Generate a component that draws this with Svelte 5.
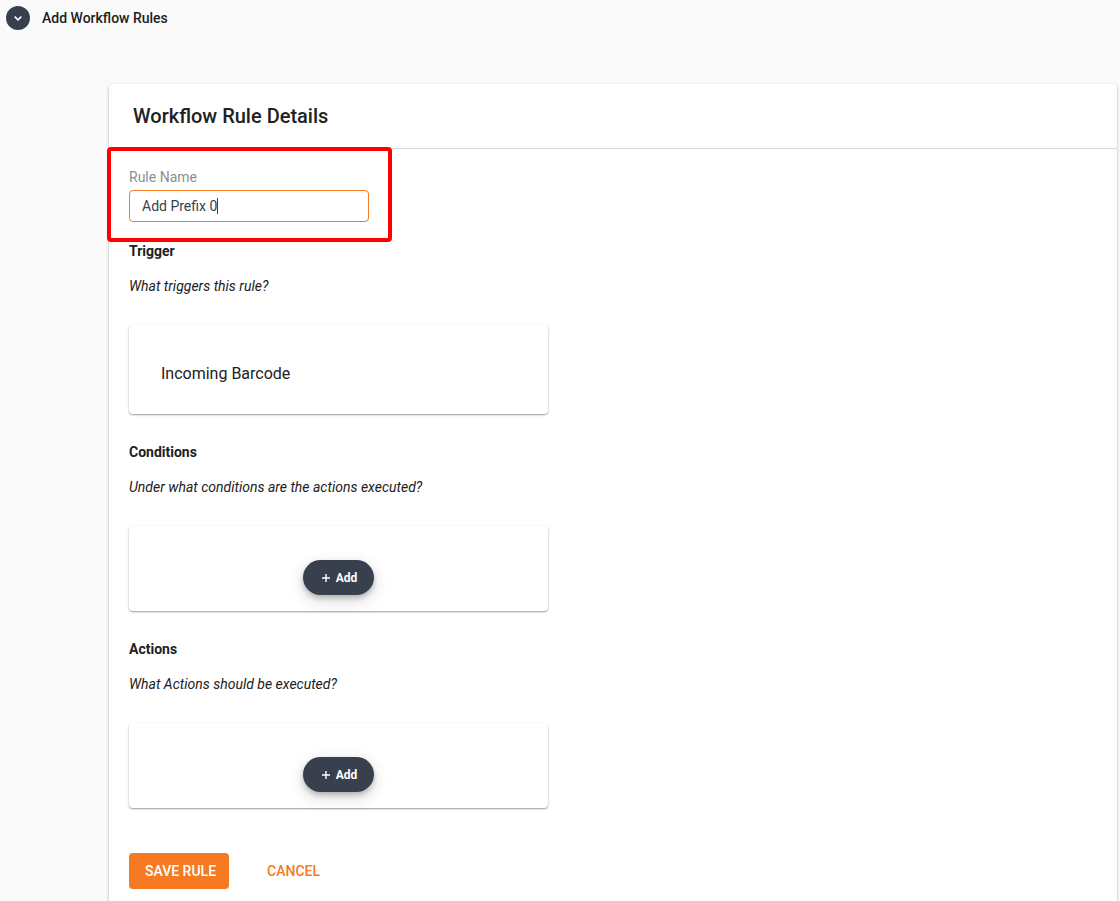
<script lang="ts">
  type Section = {
    title: string;
    question: string;
    value?: string;
  };

  const sections: Section[] = [
    { title: 'Trigger', question: 'What triggers this rule?', value: 'Incoming Barcode' },
    { title: 'Conditions', question: 'Under what conditions are the actions executed?' },
    { title: 'Actions', question: 'What Actions should be executed?' }
  ];

  let ruleName = $state('Add Prefix 0');
</script>

<div class="page">
  <header class="topbar">
    <button type="button" class="toggle" aria-label="Collapse">
      <svg width="24" height="24" viewBox="0 0 24 24" aria-hidden="true">
        <path d="M8.7 10.7 12 13.8l3.3-3.1" fill="none" stroke="currentColor" stroke-width="1.7" />
      </svg>
    </button>
    <h1>Add Workflow Rules</h1>
  </header>

  <main class="panel">
    <h2>Workflow Rule Details</h2>

    <form class="content" onsubmit={(event) => event.preventDefault()}>
      <div class="field">
        <label for="rule-name">Rule Name</label>
        <div class="input-wrap">
          <input id="rule-name" type="text" autocomplete="off" spellcheck="false" bind:value={ruleName} />
          <!-- caret follows an invisible copy of the value -->
          <div class="caret" aria-hidden="true">{ruleName}</div>
        </div>
      </div>

      {#each sections as section}
        <section>
          <h3>{section.title}</h3>
          <p class="question">{section.question}</p>
          <div class="card" class:filled={section.value}>
            {#if section.value}
              <span>{section.value}</span>
            {:else}
              <button type="button" class="add">
                <svg width="8" height="8" viewBox="0 0 8 8" aria-hidden="true">
                  <path d="M4 0v8M0 4h8" stroke="currentColor" stroke-width="1.4" />
                </svg>
                Add
              </button>
            {/if}
          </div>
        </section>
      {/each}

      <div class="actions">
        <button type="submit" class="btn btn-primary">SAVE RULE</button>
        <button type="button" class="btn btn-text">CANCEL</button>
      </div>
    </form>
  </main>
</div>

<style>
  :global(body) {
    background: #fafafa;
  }

  .page {
    --dark: #39404d;
    --orange: #f57a22;
    --text: #212121;
    display: flex;
    flex-direction: column;
    min-height: 100vh;
    color: var(--text);
    font-family: Roboto, sans-serif;
    font-size: 14px;
    line-height: 20px;
  }

  h1, h2, h3, p {
    margin: 0;
  }

  button {
    border: 0;
    padding: 0;
    font-family: inherit;
    cursor: pointer;
  }

  .topbar {
    display: flex;
    align-items: center;
    gap: 12px;
    height: 36px;
    padding: 0 6px;
  }

  .toggle {
    display: flex;
    border-radius: 50%;
    background: var(--dark);
    color: #fff;
  }

  h1 {
    font-size: 14px;
    font-weight: 500;
  }

  .panel {
    flex: 1;
    margin: 48px 3px 0 109px;
    border-radius: 4px 4px 0 0;
    background: #fff;
    box-shadow: 0 1px 3px rgba(0, 0, 0, 0.3);
  }

  h2 {
    padding: 20px 24px;
    border-bottom: 1px solid #d9d9d9;
    font-size: 20px;
    font-weight: 500;
    line-height: 24px;
  }

  .content {
    padding: 18px 20px 24px;
  }

  .field {
    position: relative;
    width: 240px;
    margin-bottom: 19px;
  }

  .field::after {
    content: '';
    position: absolute;
    inset: -20px -23px -20px -22px;
    border: 4px solid #fe0000;
    border-radius: 4px;
    pointer-events: none;
  }

  label {
    display: block;
    margin-bottom: 3px;
    color: #8b8e94;
  }

  .input-wrap {
    position: relative;
  }

  input {
    display: block;
    box-sizing: border-box;
    width: 100%;
    height: 32px;
    padding: 0 12px;
    border: 1px solid var(--orange);
    border-radius: 4px;
    outline: none;
    background: #fff;
    color: var(--dark);
    font-family: inherit;
    font-size: 14px;
    caret-color: transparent;
  }

  .caret {
    position: absolute;
    top: 8px;
    left: 13px;
    height: 16px;
    border-right: 1px solid var(--dark);
    color: transparent;
    line-height: 16px;
    white-space: pre;
    pointer-events: none;
  }

  section + section {
    margin-top: 28px;
  }

  h3 {
    font-size: 14px;
    font-weight: 700;
  }

  .question {
    margin: 15px 0 29px;
    font-style: italic;
  }

  .card {
    display: flex;
    justify-content: center;
    box-sizing: border-box;
    max-width: 419px;
    padding: 34px 0 16px;
    border-radius: 4px;
    box-shadow: 0 1px 2px rgba(0, 0, 0, 0.4);
  }

  .card.filled {
    justify-content: flex-start;
    padding: 37px 32px 28px;
    font-size: 16px;
    line-height: 24px;
  }

  .add {
    display: flex;
    align-items: center;
    gap: 6px;
    height: 35px;
    padding: 0 17px 0 19px;
    border-radius: 18px;
    background: var(--dark);
    color: #fff;
    font-size: 12px;
    font-weight: 700;
    box-shadow: 0 3px 5px rgba(0, 0, 0, 0.2), 0 5px 16px rgba(0, 0, 0, 0.16);
  }

  .actions {
    display: flex;
    gap: 22px;
    margin-top: 45px;
  }

  .btn {
    height: 36px;
    padding: 0 13px 0 16px;
    border-radius: 4px;
    font-size: 14px;
    font-weight: 500;
  }

  .btn-primary {
    background: var(--orange);
    color: #fff;
  }

  .btn-text {
    background: transparent;
    color: var(--orange);
  }
</style>
